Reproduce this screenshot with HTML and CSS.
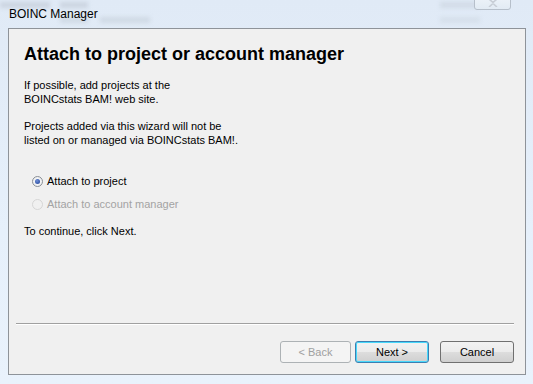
FILE: index.html
```html
<!DOCTYPE html>
<html lang="en">
<head>
    <meta charset="UTF-8">
    <title>BOINC Manager</title>
    <link rel="stylesheet" href="styles.css">
</head>
<body>
    <div class="window">
        <div class="titlebar">
            <div class="blur-bg">
                <span class="smudge s1"></span>
                <span class="smudge s2"></span>
                <span class="smudge s3"></span>
                <span class="smudge s4"></span>
                <span class="smudge s5"></span>
                <span class="smudge s6"></span>
            </div>
            <span class="title">BOINC Manager</span>
            <div class="close-btn">
                <svg width="14" height="8" viewBox="0 0 14 8">
                    <path d="M3 0 L7 3.5 L11 0 M3 8 L7 4.5 L11 8" stroke="#c8ced6" stroke-width="1.6" fill="none"/>
                </svg>
            </div>
        </div>
        <div class="client">
            <div class="page">
                <h1>Attach to project or account manager</h1>
                <p>If possible, add projects at the<br>BOINCstats BAM! web site.</p>
                <p>Projects added via this wizard will not be<br>listed on or managed via BOINCstats BAM!.</p>
                <div class="choices">
                    <label class="radio">
                        <span class="dot checked"></span>
                        Attach to project
                    </label>
                    <label class="radio disabled">
                        <span class="dot"></span>
                        Attach to account manager
                    </label>
                </div>
                <p class="hint">To continue, click Next.</p>
            </div>
            <div class="footer">
                <div class="separator"></div>
                <div class="buttons">
                    <button class="btn" disabled>&lt; Back</button>
                    <button class="btn default">Next &gt;</button>
                    <button class="btn cancel">Cancel</button>
                </div>
            </div>
        </div>
    </div>
</body>
</html>
```

FILE: styles.css
```css
body, html {
    margin: 0;
    padding: 0;
    width: 533px;
    height: 384px;
    overflow: hidden;
    font-family: Tahoma, 'DejaVu Sans', sans-serif;
    background-color: #e4eef9;
}
.window {
    display: flex;
    flex-direction: column;
    height: 384px;
    background: linear-gradient(#e0eaf6, #e6f0fb 60%, #e9f2fc);
}
.titlebar {
    position: relative;
    height: 28px;
    flex-shrink: 0;
}
.blur-bg {
    position: absolute;
    top: 0;
    left: 0;
    width: 100%;
    height: 28px;
    overflow: hidden;
    filter: blur(2px);
}
.smudge {
    position: absolute;
    height: 6px;
    background-color: #b7c0cb;
    opacity: 0.5;
}
.s1 { left: 0; top: 2px; width: 50px; }
.s2 { left: 60px; top: 2px; width: 28px; }
.s3 { left: 100px; top: 17px; width: 50px; opacity: 0.4; }
.s4 { left: 60px; top: 17px; width: 28px; opacity: 0.4; }
.s5 { left: 440px; top: 2px; width: 40px; opacity: 0.35; }
.s6 { left: 440px; top: 17px; width: 40px; opacity: 0.25; }
.title {
    position: relative;
    display: block;
    padding: 7px 0 0 9px;
    font-family: 'Liberation Sans', Arial, sans-serif;
    font-size: 12px;
    color: #000;
}
.close-btn {
    position: absolute;
    top: -10px;
    right: 22px;
    width: 37px;
    height: 20px;
    border: 1px solid #b6bfca;
    border-radius: 3px;
    background: linear-gradient(#f3f7fb, #e2ebf4);
    display: flex;
    align-items: flex-end;
    justify-content: center;
    padding-bottom: 2px;
    box-sizing: border-box;
}
.client {
    flex: 1;
    margin: 0 7px 9px 8px;
    background-color: #f0f0f0;
    border: 1px solid #8e9399;
    display: flex;
    flex-direction: column;
    font-family: 'Liberation Sans', Arial, sans-serif;
    font-size: 11px;
    color: #000;
}
.page {
    flex: 1;
    padding: 15px 16px 0 15px;
}
h1 {
    margin: 0 0 14px 0;
    font-size: 18px;
    font-weight: bold;
    line-height: 20px;
}
p {
    margin: 0 0 13px 0;
    line-height: 14px;
}
.choices {
    display: flex;
    flex-direction: column;
    gap: 9px;
    padding: 14px 0 0 8px;
    margin-bottom: 13px;
}
.radio {
    display: flex;
    align-items: center;
    gap: 4px;
    height: 14px;
}
.radio.disabled {
    color: #a3a3a3;
}
.dot {
    width: 11px;
    height: 11px;
    border-radius: 50%;
    border: 1px solid #8a8f96;
    background: radial-gradient(#ffffff, #e6e8ea);
    box-sizing: border-box;
    display: flex;
    align-items: center;
    justify-content: center;
}
.dot.checked::after {
    content: "";
    width: 5px;
    height: 5px;
    border-radius: 50%;
    background: radial-gradient(circle at 40% 35%, #6f8fd6, #1c3f95);
}
.radio.disabled .dot {
    border-color: #d6d6d6;
    background: #f0f0f0;
}
.footer {
    padding: 0 11px 0 7px;
}
.separator {
    height: 1px;
    background-color: #a0a0a0;
    border-bottom: 1px solid #fff;
}
.buttons {
    display: flex;
    justify-content: flex-end;
    padding: 16px 0 11px 0;
}
.btn {
    width: 74px;
    height: 22px;
    font-family: 'Liberation Sans', Arial, sans-serif;
    font-size: 11px;
    color: #000;
    border: 1px solid #707070;
    border-radius: 3px;
    background: linear-gradient(#f2f2f2 0%, #ebebeb 50%, #dddddd 51%, #cfcfcf 100%);
    padding: 0;
}
.btn[disabled] {
    width: 71px;
    color: #a0a0a0;
    border-color: #adb2b5;
    background: #f4f4f4;
}
.btn.default {
    margin-left: 4px;
    border-color: #3c7fb1;
    box-shadow: inset 0 0 0 1px #48d8fb;
}
.btn.cancel {
    margin-left: 11px;
}
```
